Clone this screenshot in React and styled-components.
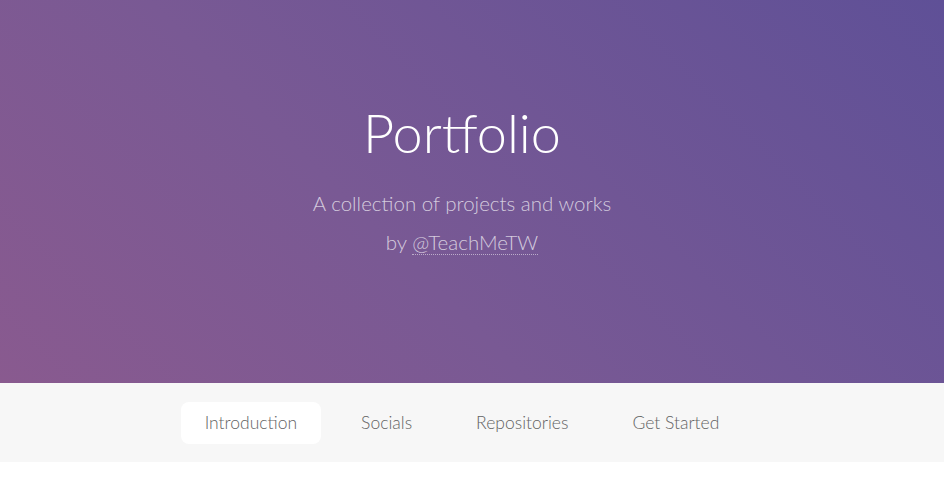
import React from 'react'
import styled, {createGlobalStyle} from 'styled-components'

//-- hero header with a title, tagline and a row of section tabs

const GlobalStyle = createGlobalStyle`
  html, body {
    margin: 0;
    padding: 0;
    background: #ffffff;
  }
  body {
    font-family: Lato, "Open Sans", sans-serif;
    font-weight: 300;
    color: #636363;
  }
`;

const Header = styled.header`
  height: 383px;
  box-sizing: border-box;
  padding: 94px 20px 0 0;
  display: flex;
  flex-direction: column;
  align-items: center;
  text-align: center;
  background-image: linear-gradient(45deg, #895a8f 0%, #795994 40%, #5f5097 100%);
`;

const Title = styled.h1`
  margin: 0;
  font-size: 54px;
  line-height: 78px;
  font-weight: 300;
  color: #ffffff;
`;

const Tagline = styled.p`
  margin: 12px 0 0;
  font-size: 20.5px;
  line-height: 39px;
  font-weight: 300;
  color: rgba(255, 255, 255, 0.7);
`;

const Handle = styled.a`
  color: inherit;
  text-decoration: none;
  border-bottom: 1px dotted rgba(255, 255, 255, 0.5);
`;

const Nav = styled.nav`
  height: 79px;
  background: #f7f7f7;
  display: flex;
  justify-content: center;
  align-items: center;
  padding-right: 20px;
`;

const Tabs = styled.ul`
  list-style: none;
  margin: 0;
  padding: 0;
  display: flex;
  gap: 16px;
`;

const Tab = styled.a`
  display: block;
  height: 42px;
  line-height: 42px;
  padding: 0 24px;
  border-radius: 8px;
  font-size: 17.5px;
  font-weight: 300;
  color: #636363;
  text-decoration: none;
  background: ${p => (p.$active ? '#ffffff' : 'transparent')};
`;

const tabs = ['Introduction', 'Socials', 'Repositories', 'Get Started'];

export default function App() {
  return (
    <>
      <GlobalStyle />
      <Header>
        <Title>Portfolio</Title>
        <Tagline>
          A collection of projects and works
          <br />
          by <Handle href="#">@TeachMeTW</Handle>
        </Tagline>
      </Header>
      <Nav>
        <Tabs>
          {tabs.map((t, i) => (
            <li key={t}>
              <Tab href="#" $active={i === 0}>{t}</Tab>
            </li>
          ))}
        </Tabs>
      </Nav>
    </>
  );
}
